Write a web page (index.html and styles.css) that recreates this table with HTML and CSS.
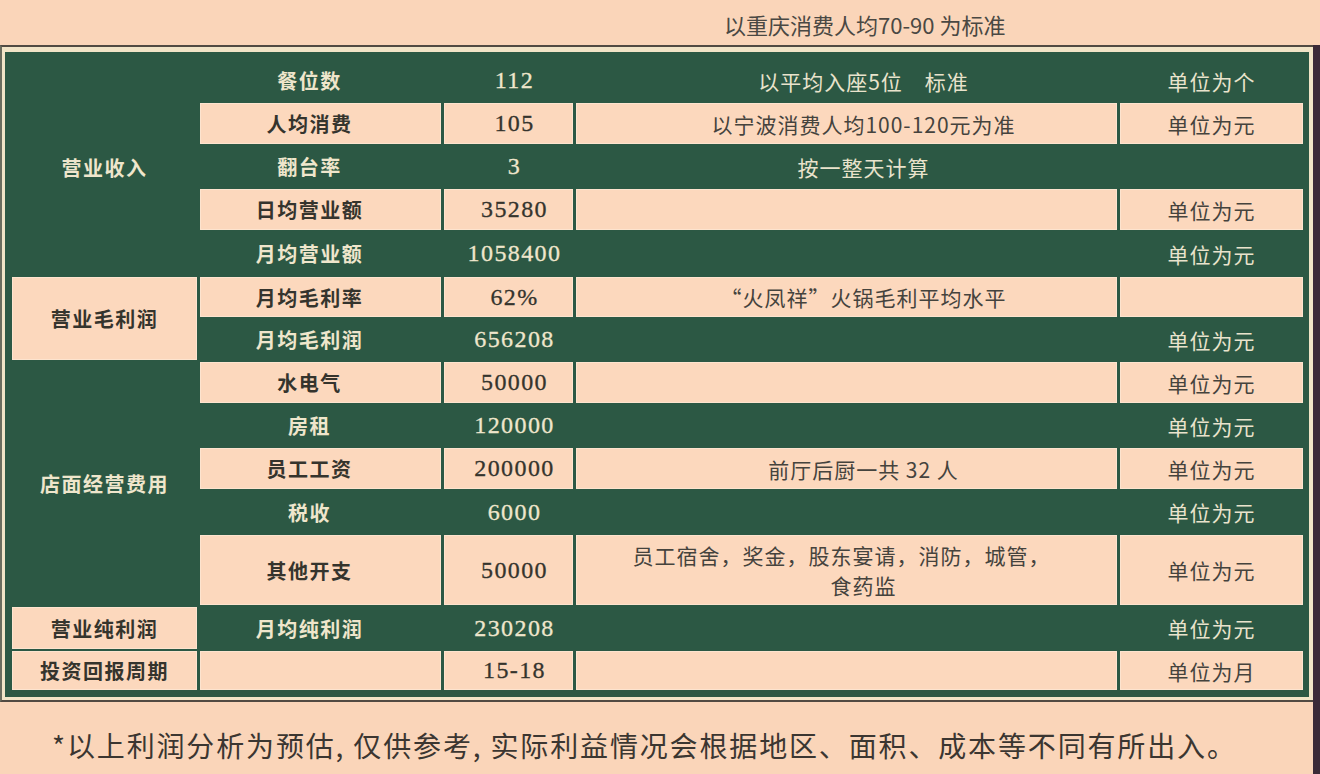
FILE: index.html
```html
<!DOCTYPE html>
<html lang="zh-CN">
<head>
<meta charset="utf-8">
<title>火锅店利润分析</title>
<link rel="stylesheet" href="styles.css">
</head>
<body>
<div class="page">
  <header class="top"><span class="top-text">以重庆消费人均70-90 为标准</span></header>
  <div class="main">
    <div class="frame">
      <div class="board">
        <div class="cell c1 g span5">营业收入</div>
        <div class="cell c2 g">餐位数</div>
        <div class="cell c3 g">112</div>
        <div class="cell c4 g">以平均入座5位　标准</div>
        <div class="cell c5 g">单位为个</div>

        <div class="cell c2 p">人均消费</div>
        <div class="cell c3 p">105</div>
        <div class="cell c4 p">以宁波消费人均100-120元为准</div>
        <div class="cell c5 p">单位为元</div>

        <div class="cell c2 g">翻台率</div>
        <div class="cell c3 g">3</div>
        <div class="cell c4 g">按一整天计算</div>
        <div class="cell c5 g"></div>

        <div class="cell c2 p">日均营业额</div>
        <div class="cell c3 p">35280</div>
        <div class="cell c4 p"></div>
        <div class="cell c5 p">单位为元</div>

        <div class="cell c2 g">月均营业额</div>
        <div class="cell c3 g">1058400</div>
        <div class="cell c4 g"></div>
        <div class="cell c5 g">单位为元</div>

        <div class="cell c1 p span2">营业毛利润</div>
        <div class="cell c2 p">月均毛利率</div>
        <div class="cell c3 p">62%</div>
        <div class="cell c4 p">“火凤祥”火锅毛利平均水平</div>
        <div class="cell c5 p"></div>

        <div class="cell c2 g">月均毛利润</div>
        <div class="cell c3 g">656208</div>
        <div class="cell c4 g"></div>
        <div class="cell c5 g">单位为元</div>

        <div class="cell c1 g span5">店面经营费用</div>
        <div class="cell c2 p">水电气</div>
        <div class="cell c3 p">50000</div>
        <div class="cell c4 p"></div>
        <div class="cell c5 p">单位为元</div>

        <div class="cell c2 g">房租</div>
        <div class="cell c3 g">120000</div>
        <div class="cell c4 g"></div>
        <div class="cell c5 g">单位为元</div>

        <div class="cell c2 p">员工工资</div>
        <div class="cell c3 p">200000</div>
        <div class="cell c4 p">前厅后厨一共 32 人</div>
        <div class="cell c5 p">单位为元</div>

        <div class="cell c2 g">税收</div>
        <div class="cell c3 g">6000</div>
        <div class="cell c4 g"></div>
        <div class="cell c5 g">单位为元</div>

        <div class="cell c2 p">其他开支</div>
        <div class="cell c3 p">50000</div>
        <div class="cell c4 p multi"><span class="line first">员工宿舍，奖金，股东宴请，消防，城管，</span><span class="line">食药监</span></div>
        <div class="cell c5 p">单位为元</div>

        <div class="cell c1 p">营业纯利润</div>
        <div class="cell c2 g">月均纯利润</div>
        <div class="cell c3 g">230208</div>
        <div class="cell c4 g"></div>
        <div class="cell c5 g">单位为元</div>

        <div class="cell c1 p">投资回报周期</div>
        <div class="cell c2 p"></div>
        <div class="cell c3 p">15-18</div>
        <div class="cell c4 p"></div>
        <div class="cell c5 p">单位为月</div>
      </div>
    </div>
    <p class="note">*以上利润分析为预估, 仅供参考, 实际利益情况会根据地区、面积、成本等不同有所出入。</p>
  </div>
</div>
</body>
</html>
```

FILE: styles.css
```css
html, body {
  margin: 0;
  padding: 0;
}
body {
  width: 1320px;
  height: 774px;
  overflow: hidden;
  background: #fad5b9;
  font-family: "Noto Sans CJK SC", sans-serif;
  color: #3a3831;
}
.page {
  width: 1320px;
  height: 774px;
}
.top {
  height: 43px;
  padding-top: 2px;
  line-height: 44px;
  padding-left: 724px;
  font-size: 22px;
  color: #4a4843;
  box-sizing: content-box;
}
.main {
  border-right: 7px solid #3b2a38;
  height: 729px;
}
.frame {
  border-top: 2px solid #514a42;
  border-bottom: 2px solid #514a42;
  border-left: 2px solid #6a6c5e;
}
.board {
  border-style: solid;
  border-color: #f1e4c7;
  border-width: 5px 4px 3px 3px;
  background: #2c5844;
  padding: 8px 6px 7px 7px;
  display: grid;
  grid-template-columns: 185px 241px 129px 541px 183px;
  grid-template-rows: 41px 41px 41px 41px 43px 40px 41px 41px 41px 41px 42px 70px 42px 39px;
  column-gap: 3px;
  row-gap: 2px;
}
.cell {
  display: flex;
  align-items: center;
  justify-content: center;
  text-align: center;
  box-sizing: border-box;
  white-space: nowrap;
}
.p {
  background: #fcd8bd;
  box-shadow: inset 0 0 0 1px #fde4cf;
  color: #35342d;
}
.g {
  color: #efe6cc;
}
.c1 {
  grid-column: 1;
  font-size: 20px;
  font-weight: 700;
  letter-spacing: 1.5px;
}
.span5 { grid-row: span 5; }
.span2 { grid-row: span 2; }
.c2 {
  grid-column: 2;
  font-size: 20px;
  font-weight: 700;
  letter-spacing: 1.5px;
  padding-right: 22px;
}
.c3 {
  grid-column: 3;
  font-family: "Liberation Serif", "Noto Sans CJK SC", serif;
  font-size: 24px;
  letter-spacing: 1.4px;
  padding-left: 12px;
  -webkit-text-stroke: 0.3px currentColor;
}
.c4 {
  grid-column: 4;
  font-size: 21px;
  letter-spacing: 1px;
  padding-left: 34px;
}
.c5 {
  grid-column: 5;
  font-size: 21px;
  letter-spacing: 1px;
}
.c4.p, .c5.p {
  color: #45433d;
}
.c4.g, .c5.g {
  color: #e9e3cc;
}
.multi {
  flex-direction: column;
  line-height: 30px;
}
.line {
  display: block;
}
.line.first {
  margin-left: -44px;
}
.note {
  margin: 0;
  height: 58px;
  padding-top: 14px;
  padding-left: 52px;
  line-height: 58px;
  font-size: 28px;
  letter-spacing: 1.85px;
  color: #3b3631;
  white-space: nowrap;
}
```
